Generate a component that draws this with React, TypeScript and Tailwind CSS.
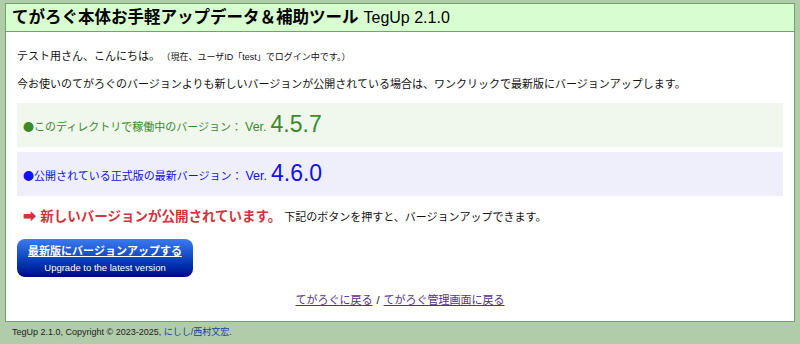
const CJK = { fontFamily: '"Noto Sans CJK JP", sans-serif' }

export default function App() {
  return (
    <div
      className="min-h-[344px] bg-[#b0cca8] px-[5px] pt-[3px] text-[#111]"
      style={{ fontFamily: '"Liberation Sans", "Noto Sans CJK JP", sans-serif' }}
    >
      <div className="border border-[#6fa663] bg-white">
        <div className="flex h-[28px] items-end gap-[5px] border-b border-[#6fa663] bg-[#d8fdd0] px-[6px] pb-[3px]">
          <h1 className="text-[16.5px] font-bold leading-[22px] text-black">てがろぐ本体お手軽アップデータ＆補助ツール</h1>
          <span className="text-[16px] leading-[21px] text-black">TegUp 2.1.0</span>
        </div>

        <div className="px-[11px] pt-[15px] pb-[13px]">
          <p className="text-[11px] leading-[18px]">
            テスト用さん、こんにちは。
            <span className="ml-[6px] text-[9px]">（現在、ユーザID「test」でログイン中です。）</span>
          </p>
          <p className="mt-[9px] text-[11px] leading-[18px]">
            今お使いのてがろぐのバージョンよりも新しいバージョンが公開されている場合は、ワンクリックで最新版にバージョンアップします。
          </p>

          <div className="mt-[10px] flex h-[44px] items-center bg-[#f0f8ee] px-[6px] pt-[4px] text-[#3b8a2a]">
            <span className="text-[11px]"><span style={CJK}>●</span>このディレクトリで稼働中のバージョン：</span>
            <span className="ml-[3px] text-[12.5px]">Ver.</span>
            <span className="ml-[4px] -mt-[6px] text-[23px] leading-[28px]">4.5.7</span>
          </div>
          <div className="mt-[5px] flex h-[44px] items-center bg-[#efeffc] px-[6px] pt-[4px] text-[#1111ee]">
            <span className="text-[11px]"><span style={CJK}>●</span>公開されている正式版の最新バージョン：</span>
            <span className="ml-[3px] text-[12.5px]">Ver.</span>
            <span className="ml-[4px] -mt-[6px] text-[23px] leading-[28px]">4.6.0</span>
          </div>

          <p className="mt-[11px] flex items-baseline pl-[6px] leading-[20px]">
            <span className="text-[13.5px] font-bold text-[#d1343d]">➡ 新しいバージョンが公開されています。</span>
            <span className="ml-[3px] text-[11px]">下記のボタンを押すと、バージョンアップできます。</span>
          </p>

          <button className="mt-[12px] flex h-[38px] w-[176px] flex-col items-center justify-center rounded-[8px] bg-gradient-to-b from-[#3b7af0] to-[#00008c] text-white">
            <span className="text-[11px] font-bold leading-[15px] underline">最新版にバージョンアップする</span>
            <span className="mt-[3px] text-[9.5px] leading-[11px]">Upgrade to the latest version</span>
          </button>

          <p className="mt-[15px] text-center text-[11px] leading-[16px]">
            <a href="#" className="text-[#55308f] underline">てがろぐに戻る</a>
            <span className="mx-[4px]">/</span>
            <a href="#" className="text-[#55308f] underline">てがろぐ管理画面に戻る</a>
          </p>
        </div>
      </div>
      <p className="pl-[7px] pt-[4px] text-[9px] leading-[12px] text-[#222]">
        TegUp 2.1.0, Copyright © 2023-2025, <a href="#" className="text-[#1a3c9c]">にしし/西村文宏</a>.
      </p>
    </div>
  )
}
